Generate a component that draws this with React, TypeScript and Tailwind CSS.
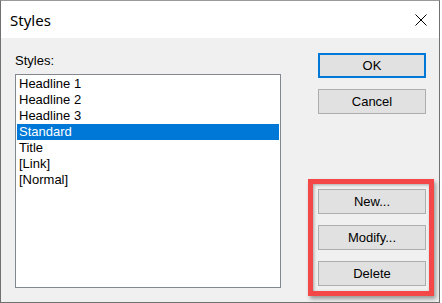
import React from "react";

const items = ["Headline 1", "Headline 2", "Headline 3", "Standard", "Title", "[Link]", "[Normal]"];

function Btn({ label, primary }: { label: string; primary?: boolean }) {
  return (
    <div
      className={
        "w-[108px] h-[25px] flex items-center justify-center bg-[#e1e1e1] text-[13px] leading-[16px] text-black " +
        (primary ? "border-2 border-[#0078d7]" : "border border-[#adadad]")
      }
    >
      {label}
    </div>
  );
}

export default function App() {
  return (
    <div className="w-[442px] h-[303px] bg-white overflow-hidden" style={{ fontFamily: '"Liberation Sans", Arial, sans-serif' }}>
      <div className="w-[440px] h-[303px] border border-[#707070] border-t-[#9a9a9a] flex flex-col">
        <div className="h-[37px] bg-white flex items-center justify-between pl-[9px] pr-[12px] shrink-0">
          <span className="text-[15px] leading-[20px] text-black mt-[1px]" style={{ fontFamily: '"Noto Sans", "Open Sans", sans-serif' }}>
            Styles
          </span>
          <svg width="12" height="12" viewBox="0 0 12 12" className="mt-[1px]">
            <path d="M0.5 0.5 L11.5 11.5 M11.5 0.5 L0.5 11.5" stroke="#000" strokeWidth="1" fill="none" />
          </svg>
        </div>
        <div className="flex-1 bg-[#f0f0f0] flex pl-[14px]">
          <div className="flex flex-col w-[266px] pt-[15px]">
            <div className="text-[13px] leading-[16px] text-black">Styles:</div>
            <div className="mt-[5px] h-[214px] bg-white border border-[#828790] p-[1px]">
              {items.map((it) => (
                <div
                  key={it}
                  className={
                    "h-[16px] pl-[2px] text-[13px] leading-[16px] whitespace-nowrap " +
                    (it === "Standard" ? "bg-[#0078d7] text-white" : "text-black")
                  }
                >
                  {it}
                </div>
              ))}
            </div>
          </div>
          <div className="ml-[27px] flex flex-col pt-[15px]">
            <div className="ml-[10px] flex flex-col gap-[11px]">
              <Btn label="OK" primary />
              <Btn label="Cancel" />
            </div>
            <div className="mt-[65px] w-[126px] border-[5px] border-[#f44848] p-[5px] flex flex-col gap-[11px] shadow-[2px_3px_4px_rgba(0,0,0,0.35),inset_1px_1px_3px_rgba(0,0,0,0.3)]">
              <Btn label="New..." />
              <Btn label="Modify..." />
              <Btn label="Delete" />
            </div>
          </div>
        </div>
      </div>
    </div>
  );
}
